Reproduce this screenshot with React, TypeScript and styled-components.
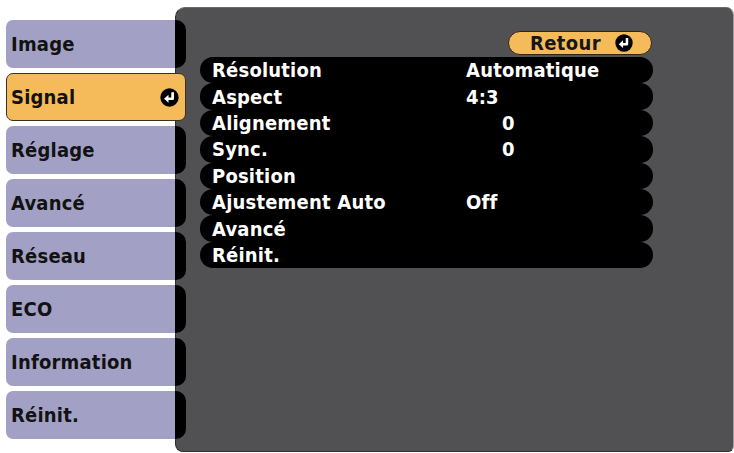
import React from "react";
import styled, { createGlobalStyle } from "styled-components";

type tabProps = {
  active?: boolean;
};
type valueProps = {
  indent?: boolean;
};

const tabs = [
  "Image",
  "Signal",
  "Réglage",
  "Avancé",
  "Réseau",
  "ECO",
  "Information",
  "Réinit.",
];

const rows: { label: string; value?: string; indent?: boolean }[] = [
  { label: "Résolution", value: "Automatique" },
  { label: "Aspect", value: "4:3" },
  { label: "Alignement", value: "0", indent: true },
  { label: "Sync.", value: "0", indent: true },
  { label: "Position" },
  { label: "Ajustement Auto", value: "Off" },
  { label: "Avancé" },
  { label: "Réinit." },
];

const EnterIcon: React.FC<{ size: number }> = ({ size }) => (
  <svg width={size} height={size} viewBox="0 0 17 17">
    <circle cx="8.5" cy="8.5" r="8.2" fill="#000" />
    <path
      d="M11.3 3.8 V9.6 H7"
      stroke="#fff"
      strokeWidth="2.4"
      fill="none"
      strokeLinejoin="round"
    />
    <path d="M3.6 9.6 L7.6 6 V13.2 Z" fill="#fff" />
  </svg>
);

const App: React.FC = () => {
  return (
    <>
      <GlobalStyle />
      <Screen>
        <Nav>
          {tabs.map((t) =>
            t === "Signal" ? (
              <Tab key={t} active>
                <TabLabel active>
                  {t}
                  <EnterIcon size={19} />
                </TabLabel>
              </Tab>
            ) : (
              <Tab key={t}>
                <TabLabel>{t}</TabLabel>
                <Cap />
              </Tab>
            )
          )}
        </Nav>
        <Panel>
          <Content>
            <BackButton>
              Retour
              <EnterIcon size={18} />
            </BackButton>
            <List>
              {rows.map((r) => (
                <Row key={r.label}>
                  <Label>{r.label}</Label>
                  {r.value && <Value indent={r.indent}>{r.value}</Value>}
                </Row>
              ))}
            </List>
          </Content>
        </Panel>
      </Screen>
    </>
  );
};
export default App;

const GlobalStyle = createGlobalStyle`
  body {
    margin: 0;
    background: #fff;
    font-family: "DejaVu Sans Condensed", "DejaVu Sans", "Liberation Sans", sans-serif;
    font-stretch: condensed;
  }
`;

const Screen = styled.div`
  width: 734px;
  height: 453px;
  display: flex;
  align-items: flex-start;
  padding-left: 6px;
  box-sizing: border-box;
  overflow: hidden;
`;

const Nav = styled.div`
  position: relative;
  z-index: 1;
  width: 180px;
  flex-shrink: 0;
  margin-right: -11px;
  padding-top: 20px;
  display: flex;
  flex-direction: column;
  gap: 5px;
`;

const Tab = styled.div<tabProps>`
  height: 48px;
  display: flex;
  box-sizing: border-box;
  ${(p) =>
    p.active &&
    `
    background: #f5bb5b;
    border: 1px solid #3c3020;
    border-radius: 7px;
  `}
`;

const TabLabel = styled.div<tabProps>`
  flex: 1;
  display: flex;
  align-items: center;
  justify-content: space-between;
  padding-right: 6px;
  font-size: 20px;
  font-weight: 700;
  color: #121212;
  letter-spacing: 0.2px;
  border-radius: 7px 0 0 7px;
  background: ${(p) => (p.active ? "transparent" : "#a2a1c5")};
  padding-left: ${(p) => (p.active ? "4px" : "5px")};
`;

const Cap = styled.div`
  width: 11px;
  background: #000;
  border-radius: 0 10px 10px 0;
`;

const Panel = styled.div`
  flex: 1;
  margin-top: 7px;
  height: 445px;
  background: #515153;
  border: 1px solid #2e2e30;
  border-top-color: #6a6a6a;
  border-right-color: #9a9a9a;
  border-radius: 10px 8px 6px 8px;
  box-sizing: border-box;
  padding: 23px 0 0 24px;
`;

const Content = styled.div`
  width: 453px;
  display: flex;
  flex-direction: column;
`;

const BackButton = styled.div`
  align-self: flex-end;
  margin-right: 1px;
  width: 144px;
  height: 24px;
  box-sizing: border-box;
  background: #f5bb5b;
  border: 1px solid #2e2616;
  border-radius: 12px;
  display: flex;
  align-items: center;
  justify-content: flex-end;
  gap: 14px;
  padding-right: 18px;
  font-size: 20px;
  font-weight: 700;
  color: #161616;
  letter-spacing: 0.4px;
`;

const List = styled.div`
  margin-top: 2px;
  display: flex;
  flex-direction: column;
`;

const Row = styled.div`
  height: 26.4px;
  background: #000;
  border-radius: 13px;
  display: flex;
  align-items: center;
  padding-left: 12px;
  color: #fff;
  font-size: 20px;
  font-weight: 700;
  letter-spacing: 0.2px;
`;

const Label = styled.span`
  width: 254px;
  flex-shrink: 0;
  white-space: nowrap;
`;

const Value = styled.span<valueProps>`
  padding-left: ${(p) => (p.indent ? "36px" : "0")};
`;
